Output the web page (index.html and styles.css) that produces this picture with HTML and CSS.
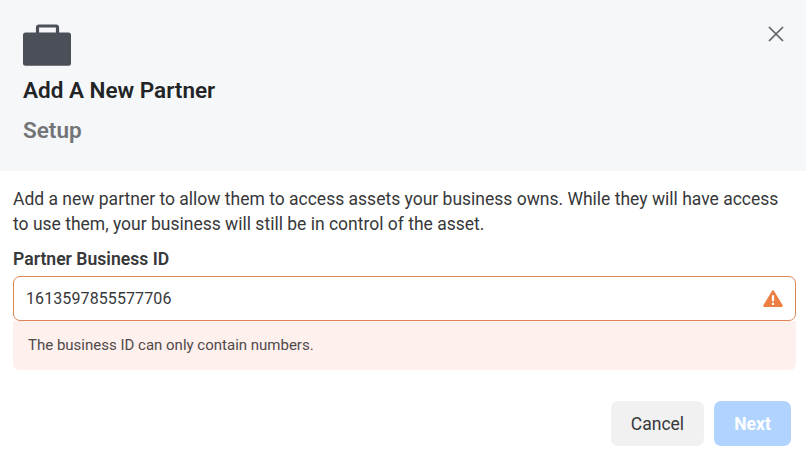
FILE: index.html
```html
<!DOCTYPE html>
<html lang="en">

<head>
    <meta charset="utf-8">
    <meta name="viewport" content="width=device-width, initial-scale=1">
    <title>Add A New Partner</title>
    <link rel="stylesheet" href="styles.css">
</head>

<body>
    <div class="dialog">
        <header class="dialog-header">
            <div class="heading">
                <svg class="briefcase" viewBox="0 0 48 42" width="48" height="42">
                    <path d="M14.5 9V3.5a1.5 1.5 0 0 1 1.5-1.5h17a1.5 1.5 0 0 1 1.5 1.5V9" fill="none" stroke="#4b4f57" stroke-width="3.2" />
                    <rect y="8.5" width="48" height="33.2" rx="2.5" fill="#4b4f57" />
                </svg>
                <h1>Add A New Partner</h1>
                <h2>Setup</h2>
            </div>
            <button class="close" type="button" aria-label="Close">
                <svg viewBox="0 0 16 16" width="16" height="16">
                    <path d="M1 1l14 14M15 1L1 15" fill="none" stroke="#606368" stroke-width="1.7" />
                </svg>
            </button>
        </header>

        <main class="dialog-body">
            <p class="intro">Add a new partner to allow them to access assets your business owns. While they will have access to use them, your business will still be in control of the asset.</p>
            <label class="label" for="business-id">Partner Business ID</label>
            <div class="field">
                <input id="business-id" type="text" value="1613597855577706">
                <svg class="warning" viewBox="0 0 20 18" width="20" height="18">
                    <path d="M10 1.5L18.5 15.7H1.5z" fill="#ed7f43" stroke="#ed7f43" stroke-width="2.4" stroke-linejoin="round" />
                    <path d="M10 5.2v6M10 12.7v2.2" stroke="#fff" stroke-width="2.2" />
                </svg>
            </div>
            <div class="error">The business ID can only contain numbers.</div>
        </main>

        <footer class="dialog-footer">
            <button class="btn" type="button">Cancel</button>
            <button class="btn btn-next" type="button" disabled>Next</button>
        </footer>
    </div>
</body>

</html>
```

FILE: styles.css
```css
* {
    box-sizing: border-box;
}

body {
    margin: 0;
    font-family: Roboto, Arial, sans-serif;
    color: #37383a;
    background-color: #fff;
}

.dialog {
    height: 452px;
    overflow: hidden;
}

.dialog-header {
    display: flex;
    justify-content: space-between;
    align-items: flex-start;
    height: 171px;
    padding: 24px 22px 0 23px;
    background-color: #f5f7f9;
}

.briefcase {
    display: block;
}

h1,
h2 {
    margin: 0;
    font-size: 22.5px;
    font-weight: 600;
    line-height: 40px;
}

h1 {
    margin-top: 4px;
    color: #222426;
}

h2 {
    color: #737477;
}

.close {
    padding: 2px 0;
    border: none;
    background: none;
}

.close svg {
    display: block;
}

.dialog-body {
    padding: 16px 10px 0 13px;
}

.intro {
    margin: 0;
    font-size: 17.5px;
    line-height: 25px;
}

.label {
    display: block;
    margin-top: 10px;
    font-size: 17.6px;
    font-weight: 600;
    line-height: 25px;
}

.field {
    display: flex;
    align-items: center;
    height: 45px;
    margin-top: 4px;
    padding: 0 12px;
    border: 1px solid #e08555;
    border-radius: 7px;
}

.field input {
    flex: 1;
    padding: 0;
    border: none;
    outline: none;
    background: none;
    font: 16px Roboto, Arial, sans-serif;
    letter-spacing: 0.1px;
    color: #37383a;
}

.error {
    height: 49px;
    padding: 0 15px;
    border-radius: 0 0 6px 6px;
    background-color: #fef0ec;
    color: #51494a;
    font-size: 15px;
    line-height: 48px;
}

.dialog-footer {
    display: flex;
    justify-content: flex-end;
    gap: 10px;
    padding: 31px 15px 0 0;
}

.btn {
    width: 93px;
    height: 45px;
    padding: 0;
    border: none;
    border-radius: 7px;
    background-color: #f1f1f1;
    color: #37383a;
    font: 17.5px Roboto, Arial, sans-serif;
}

.btn-next {
    width: 77px;
    background-color: #b0d4ff;
    color: #fff;
    font-weight: 700;
}
```
